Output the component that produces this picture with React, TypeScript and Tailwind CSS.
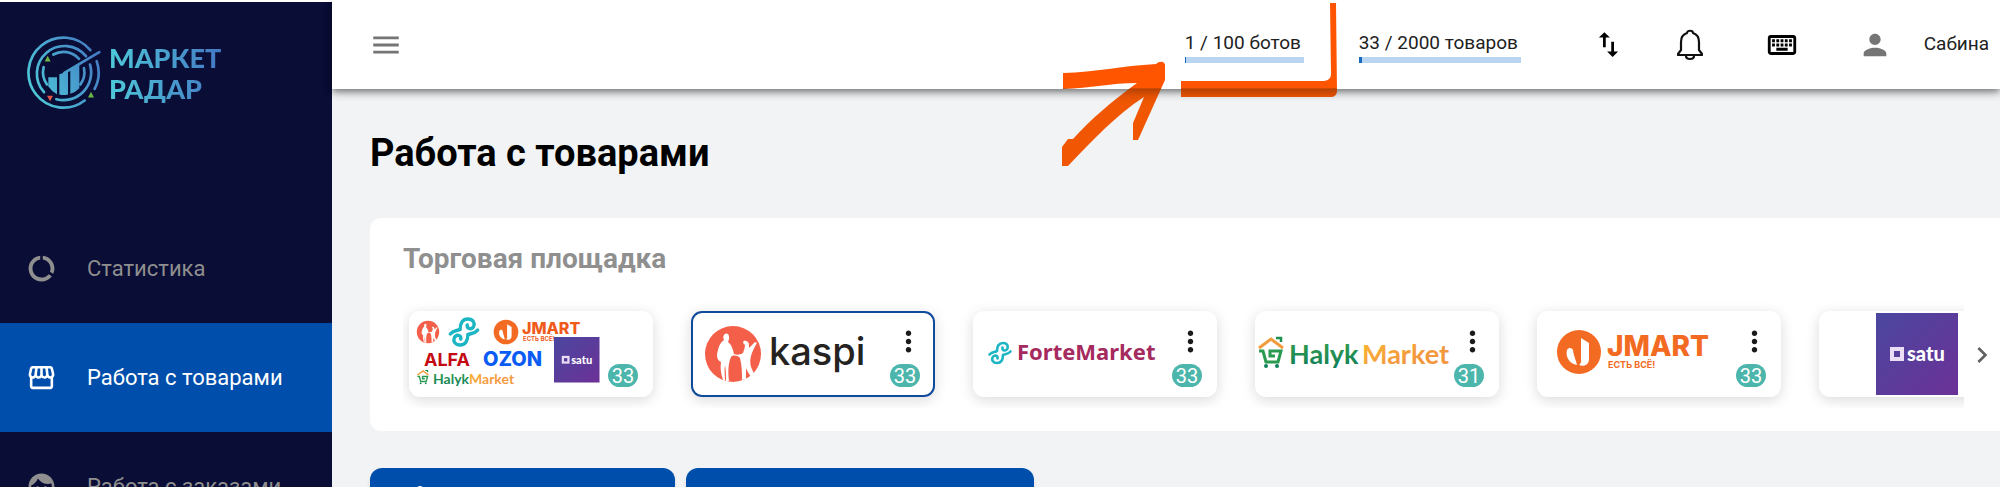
import type { ReactNode } from "react";
import {
  MdChevronRight,
  MdDataUsage,
  MdFace,
  MdImportExport,
  MdMenu,
  MdMoreVert,
  MdOutlineKeyboard,
  MdOutlineStorefront,
  MdPerson,
} from "react-icons/md";

const KASPI_FIGURES =
  "M-10 26C-12 20-13 14-12 8C-16 6-17 2-15-4C-14-9-12-12-9-14C-11-18-8-22-5-20C-3-17-4-14-5-12C-1-9 0-4 1 0C4 1 7 1 10-1C11-4 12-7 12-9C8-12 11-15 15-12C16-11 16-8 16-6L22-12L24-11C21-6 19-2 18 2C17 6 17 9 18 13L22 22L19 24C16 20 14 17 13 14L13 25L9 26C9 20 9 12 7 4C4 1 0 1-2 3C-5 10-5 18-4 27L-7 27C-7 22-7 16-8 11C-9 16-8 22-8 27Z";

const FORTE_CURL = "M-10.5 1.5C-8-1.5-5-1-3-2C-3-7-1-10 3-10C7-10 8.5-7 7.5-4.5C6-1.5 2-2 2.5-5.5";

const KaspiMark = () => (
  <g>
    <circle r="28" fill="#f35f48" />
    <path d={KASPI_FIGURES} fill="#fff" />
  </g>
);

// one curl and the same curl turned upside down
const ForteMark = () => (
  <g fill="none" stroke="#1bb5c4" strokeWidth="2.6" strokeLinecap="round">
    <path d={FORTE_CURL} />
    <path d={FORTE_CURL} transform="rotate(180)" />
  </g>
);

const JmartMark = () => (
  <g>
    <circle r="22" fill="#f36a22" />
    <path d="M2-14L10-9V7C10 13 5 15 0 13C3 11 2 8 2 6Z" fill="#fff" />
    <path d="M-12-2C-10-5-7-4-6-2C-5 5-3 8-2 13C-9 12-14 5-12-2Z" fill="#fff" />
  </g>
);

const HalykMark = () => (
  <g fill="none" strokeWidth="3">
    <path d="M1 11L13 2L25 11" stroke="#f29b3a" />
    <path d="M18 1H23V5" stroke="#1d9151" strokeWidth="2.5" />
    <path d="M1 14H5L8 25H20L23 14H12V19H17" stroke="#2a9a50" />
    <circle cx="8" cy="29" r="2" fill="#14805a" stroke="none" />
    <circle cx="19" cy="29" r="2" fill="#14805a" stroke="none" />
  </g>
);

const SatuSquare = () => (
  <g>
    <rect width="82" height="82" fill="url(#satuFill)" />
    <rect x="16" y="36" width="10" height="10" fill="none" stroke="#e9def6" strokeWidth="4" />
    <text x="31" y="48" fill="#fff" className="font-['Lato',sans-serif] text-[20px] font-black">
      satu
    </text>
  </g>
);

const Gradients = () => (
  <svg className="absolute size-0" aria-hidden="true">
    <defs>
      <linearGradient id="satuFill" x1="0" y1="0" x2="1" y2="1">
        <stop offset="0" stopColor="#4a479f" />
        <stop offset="1" stopColor="#6c3197" />
      </linearGradient>
      <linearGradient id="halykFill" x1="0" y1="0" x2="0" y2="1">
        <stop offset="0.2" stopColor="#2f9c4c" />
        <stop offset="1" stopColor="#0f7c5c" />
      </linearGradient>
      <linearGradient id="marketFill" x1="0" y1="0" x2="1" y2="1">
        <stop offset="0" stopColor="#fcb92f" />
        <stop offset="0.6" stopColor="#f2983f" />
      </linearGradient>
      <linearGradient id="brandFill" gradientUnits="userSpaceOnUse" x1="85" y1="260" x2="300" y2="150">
        <stop offset="0" stopColor="#4ec9d8" />
        <stop offset="1" stopColor="#4478c4" />
      </linearGradient>
      <linearGradient id="markerFill" gradientUnits="userSpaceOnUse" x1="0" y1="88" x2="0" y2="104">
        <stop offset="0" stopColor="#ff5500" />
        <stop offset="0.05" stopColor="#b54204" />
        <stop offset="0.5" stopColor="#e25104" />
        <stop offset="1" stopColor="#f15702" />
      </linearGradient>
    </defs>
  </svg>
);

const LogoCanvas = ({ children }: { children: ReactNode }) => (
  <svg width="200" height="86" viewBox="0 0 200 86">
    {children}
  </svg>
);

const AllLogos = () => (
  <LogoCanvas>
    <g transform="translate(19 21) scale(0.4)">
      <KaspiMark />
    </g>
    <g transform="translate(55 21) scale(1.3)">
      <ForteMark />
    </g>
    <g transform="translate(97 21) scale(0.56)">
      <JmartMark />
    </g>
    <text x="113" y="23" fill="#f05a1a" className="font-['Inter',sans-serif] text-[16px] font-extrabold">
      JMART
    </text>
    <text x="114" y="30" fill="#f05a1a" className="font-['Inter',sans-serif] text-[6px] font-bold">
      ЕСТЬ ВСЁ!
    </text>
    <text x="15" y="55" fill="#c40a12" className="font-['Inter',sans-serif] text-[18px] font-bold">
      ALFA
    </text>
    <text x="74" y="55" fill="#0a5cf5" className="font-['Inter',sans-serif] text-[20px] font-extrabold">
      OZON
    </text>
    <g transform="translate(8 59) scale(0.46)">
      <HalykMark />
    </g>
    <text x="24" y="73" fill="url(#halykFill)" className="font-['Lato',sans-serif] text-[14px] font-bold">
      Halyk
    </text>
    <text x="60" y="73" fill="url(#marketFill)" className="font-['Lato',sans-serif] text-[14px] font-bold">
      Market
    </text>
    <g transform="translate(145 26) scale(0.555)">
      <SatuSquare />
    </g>
  </LogoCanvas>
);

const KaspiLogo = () => (
  <LogoCanvas>
    <g transform="translate(42 43)">
      <KaspiMark />
    </g>
    <text x="78" y="54" fill="#24231f" className="font-['Inter',sans-serif] text-[38px] font-medium">
      kaspi
    </text>
  </LogoCanvas>
);

const ForteLogo = () => (
  <LogoCanvas>
    <g transform="translate(27 42)">
      <ForteMark />
    </g>
    <text x="44" y="49" fill="#a52a5e" className="font-['Noto_Sans',sans-serif] text-[22px] font-bold">
      ForteMarket
    </text>
  </LogoCanvas>
);

const HalykLogo = () => (
  <LogoCanvas>
    <g transform="translate(3 26)">
      <HalykMark />
    </g>
    <text x="34" y="53" fill="url(#halykFill)" className="font-['Lato',sans-serif] text-[27px] font-bold">
      Halyk
    </text>
    <text x="107" y="53" fill="url(#marketFill)" className="font-['Lato',sans-serif] text-[27px] font-bold">
      Market
    </text>
  </LogoCanvas>
);

const JmartLogo = () => (
  <LogoCanvas>
    <g transform="translate(42 41)">
      <JmartMark />
    </g>
    <text x="70" y="45" fill="#f36a22" className="font-['Inter',sans-serif] text-[28px] font-extrabold">
      JMART
    </text>
    <text x="71" y="57" fill="#f36a22" className="font-['Inter',sans-serif] text-[9px] font-bold">
      ЕСТЬ ВСЁ!
    </text>
  </LogoCanvas>
);

const SatuLogo = () => (
  <LogoCanvas>
    <g transform="translate(57 2)">
      <SatuSquare />
    </g>
  </LogoCanvas>
);

type Market = {
  name: string;
  logo: ReactNode;
  count?: number;
  menu?: boolean;
  selected?: boolean;
};

const markets: Market[] = [
  { name: "Все площадки", logo: <AllLogos />, count: 33 },
  { name: "Kaspi", logo: <KaspiLogo />, count: 33, menu: true, selected: true },
  { name: "ForteMarket", logo: <ForteLogo />, count: 33, menu: true },
  { name: "Halyk Market", logo: <HalykLogo />, count: 31, menu: true },
  { name: "Jmart", logo: <JmartLogo />, count: 33, menu: true },
  { name: "Satu", logo: <SatuLogo />, menu: true },
];

const navItems = [
  { label: "Статистика", icon: <MdDataUsage size={31} /> },
  { label: "Работа с товарами", icon: <MdOutlineStorefront size={31} />, active: true },
  { label: "Работа с заказами", icon: <MdFace size={31} /> },
];

const Brand = () => (
  <a href="#" className="flex items-center gap-[7px] pt-[32px] pl-[27px]">
    <svg width="75" height="77" viewBox="80 100 225 230">
      <g fill="none" stroke="url(#brandFill)" strokeWidth="8" strokeLinecap="round">
        <path d="M270 148A105 105 0 1 0 253 299" />
        <path d="M289 181A105 105 0 0 1 283 264" />
        <path d="M257 166A83 83 0 1 0 131 274" />
        <path d="M168 295A83 83 0 0 0 269 191" />
        <path d="M159 161A62 62 0 0 1 236 174" />
        <path d="M130 199A62 62 0 0 0 140 251" />
        <path d="M251 202A62 62 0 0 1 240 251" />
        <path d="M192 216L297 154" />
      </g>
      <g fill="url(#brandFill)">
        <path d="M144 229H170V280Q154 272 144 256Z" />
        <path d="M177 220L203 212V281Q190 284 177 281Z" />
        <path d="M210 206L237 190V262Q226 274 210 279Z" />
      </g>
      <path d="M142 165L151 182H133ZM272 273L281 290H263Z" fill="#6db544" />
      <path d="M149 301L140 285H158Z" fill="#e2574c" />
    </svg>
    <span className="bg-linear-to-r from-[#4ec9d8] to-[#4478c4] bg-clip-text font-['Lato',sans-serif] text-[27px] leading-[31px] font-black text-transparent">
      МАРКЕТ
      <br />
      РАДАР
    </span>
  </a>
);

const Sidebar = () => (
  <aside className="mt-[2px] w-[332px] shrink-0 bg-[#0a0d35]">
    <div className="h-[212px]">
      <Brand />
    </div>
    <nav>
      {navItems.map(({ label, icon, active }) => (
        <a
          key={label}
          href="#"
          className={`flex h-[109px] items-center gap-[30px] pl-[26px] text-[22px] ${
            active ? "bg-[#004eab] text-white" : "text-[#8f8f8f]"
          }`}
        >
          {icon}
          {label}
        </a>
      ))}
    </nav>
  </aside>
);

// hand-drawn arrow and frame that point at the bots counter
const Marker = () => (
  <svg
    className="pointer-events-none absolute top-0 -left-[124px] z-20"
    width="280"
    height="170"
    viewBox="1060 0 280 170"
    fill="url(#markerFill)"
    aria-hidden="true"
  >
    <path d="M1062 73C1095 72 1120 66 1155 64Q1158 61 1162 62L1164 64V80L1155 100L1137 140H1132V123L1143 97C1115 115 1092 140 1067 166H1061V147L1067 139H1072C1090 119 1110 102 1136 83C1110 83 1090 88 1062 89Z" />
    <path d="M1180 81H1323Q1330 80 1330 74L1329 3H1335L1336 92Q1335 97 1330 97H1180Z" />
  </svg>
);

const Counter = ({ text, value, children }: { text: string; value: number; children?: ReactNode }) => (
  <div className="relative flex h-full flex-col pt-[30px]">
    <span className="text-[19px] leading-[26px] text-[#212121]">{text}</span>
    <div className="mt-px h-[6px] bg-[#bad5f1]">
      <div className="h-full bg-[#1769c0]" style={{ width: `${value}%` }} />
    </div>
    {children}
  </div>
);

const Bell = () => (
  <svg width="26" height="32" viewBox="0 0 26 32" fill="none" stroke="#111" strokeWidth="2.2">
    <path d="M4 21V13C4 8 7 5 10 4C10 1 16 1 16 4C19 5 22 8 22 13V21L25 25V26H1V25Z" strokeLinejoin="round" />
    <path d="M9 27C9 31 17 31 17 27" />
  </svg>
);

const Header = () => (
  <header className="relative z-10 flex h-[89px] shrink-0 items-center bg-white pr-[11px] pl-[37px] shadow-[0_3px_6px_-1px_rgba(0,0,0,0.35),0_5px_8px_rgba(0,0,0,0.18),0_1px_12px_rgba(0,0,0,0.1)]">
    <button aria-label="Меню" className="text-[#757575]">
      <MdMenu size={34} />
    </button>
    <div className="ml-auto flex h-full items-center">
      <div className="h-full min-w-[119px]">
        <Counter text="1 / 100 ботов" value={1}>
          <Marker />
        </Counter>
      </div>
      <div className="ml-[55px] h-full min-w-[162px]">
        <Counter text="33 / 2000 товаров" value={2} />
      </div>
      <button aria-label="Импорт и экспорт" className="ml-[71px]">
        <MdImportExport size={33} />
      </button>
      <button aria-label="Уведомления" className="ml-[52px]">
        <Bell />
      </button>
      <button aria-label="Клавиатура" className="ml-[62px]">
        <MdOutlineKeyboard size={34} />
      </button>
      <button className="ml-[59px] flex items-center gap-[32px] text-[19px] text-[#212121]">
        <MdPerson size={34} className="text-[#757575]" />
        Сабина
      </button>
    </div>
  </header>
);

const MarketTile = ({ name, logo, count, menu, selected }: Market) => (
  <li
    className={`flex h-[86px] w-[244px] shrink-0 rounded-[11px] bg-white shadow-[0_3px_14px_rgba(0,0,0,0.15)] ${
      selected ? "ring-2 ring-[#0f4a9b] ring-inset" : ""
    }`}
  >
    <button aria-label={name} className="w-[199px] shrink-0">
      {logo}
    </button>
    <div className="ml-auto flex flex-col items-end justify-end pr-[12px] pb-[10px]">
      {menu && (
        <button aria-label="Действия" className="mb-[6px] text-[#1a1a1a]">
          <MdMoreVert size={33} />
        </button>
      )}
      {count && (
        <span className="mr-[5px] h-[23px] w-[30px] rounded-full bg-[#4db6ac] text-center text-[20px] leading-[24px] text-white">
          {count}
        </span>
      )}
    </div>
  </li>
);

export default function App() {
  return (
    <div className="flex h-screen overflow-hidden bg-white font-['Roboto',sans-serif]">
      <Gradients />
      <Sidebar />
      <div className="flex min-w-0 flex-1 flex-col bg-[#f1f3f5]">
        <Header />
        <main className="pt-[41px] pl-[38px]">
          <h1 className="text-[38px] leading-[46px] font-bold text-black">Работа с товарами</h1>
          <section className="mt-[42px] rounded-l-[11px] bg-white pt-[24px] pb-[23px] pl-[33px]">
            <h2 className="text-[28px] leading-[34px] font-bold text-[#8f8f8f]">Торговая площадка</h2>
            <div className="mt-[25px] flex">
              <ul className="flex min-w-0 flex-1 gap-[38px] overflow-hidden pt-[10px] pb-[11px] pl-[6px]">
                {markets.map((market) => (
                  <MarketTile key={market.name} {...market} />
                ))}
              </ul>
              <button aria-label="Вперёд" className="flex w-9 items-center justify-center text-[#616161]">
                <MdChevronRight size={32} />
              </button>
            </div>
          </section>
          <div className="mt-[37px] flex gap-[11px]">
            <button
              aria-label="Продавец"
              className="flex h-[60px] w-[305px] rounded-[12px] bg-[#004eab] pt-[14px] pl-[38px] text-white shadow-md"
            >
              <MdPerson size={24} />
            </button>
            <button aria-label="Товары" className="h-[60px] w-[348px] rounded-[12px] bg-[#004eab] shadow-md" />
          </div>
        </main>
      </div>
    </div>
  );
}
